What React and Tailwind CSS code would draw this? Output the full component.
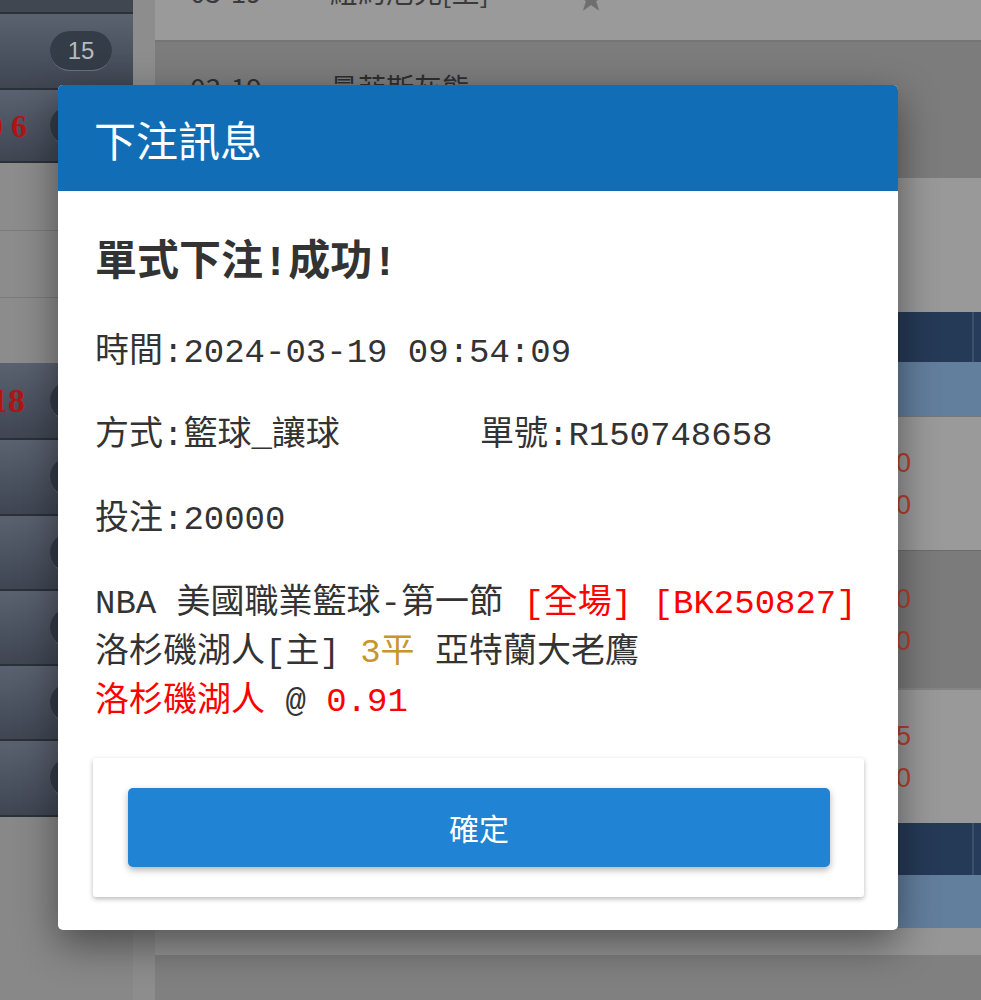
import React from 'react';

const mono = "font-['Liberation_Mono','Noto_Sans_CJK_TC',monospace]";
const cjk = "font-['Noto_Sans_CJK_TC',sans-serif]";

const DarkRow = ({ h, num, shift = '', badge }) => (
  <div className={`flex items-center border-b-2 border-[#2b3139] bg-gradient-to-b from-[#5a6270] to-[#3f4652] ${h}`}>
    <div className="w-[50px] shrink-0 overflow-hidden">
      <span className={`block whitespace-nowrap font-bold text-[#b01515] font-['Liberation_Serif',serif] leading-none ${shift}`}>
        {num}
      </span>
    </div>
    <span className="flex h-[40px] w-[62px] items-center justify-center rounded-full border-b border-[#6a717b] bg-[#343c47] text-[24px] text-[#b7bbc0] font-['Liberation_Sans',sans-serif]">
      {badge}
    </span>
  </div>
);

const OddsRow = ({ h, bg, a, b }) => (
  <div className={`flex flex-col items-end justify-center gap-[14px] pr-[70px] text-[27px] leading-[28px] text-[#b3402c] font-['Liberation_Sans',sans-serif] ${h} ${bg}`}>
    <span>{a}</span>
    <span>{b}</span>
  </div>
);

const Background = () => (
  <div className="flex h-[1000px] w-[981px]">
    {/* side list */}
    <div className="flex w-[133px] shrink-0 flex-col bg-[#888]">
      <div className="h-[14px] border-b-2 border-[#2b3139] bg-[#404751]" />
      <DarkRow h="h-[76px]" badge="15" />
      <DarkRow h="h-[73px]" num="06" shift="-ml-[13px] tracking-[8px] text-[32px]" badge="" />
      <div className="h-[68px] border-b border-[#7b7b7b] bg-[#8c8c8c]" />
      <div className="h-[67px] border-b border-[#7b7b7b] bg-[#8c8c8c]" />
      <div className="h-[65px] bg-[#8c8c8c]" />
      <DarkRow h="h-[77px]" num="18" shift="-ml-[9px] text-[34px]" badge="" />
      <DarkRow h="h-[76px]" badge="" />
      <DarkRow h="h-[75px]" badge="" />
      <DarkRow h="h-[75px]" badge="" />
      <DarkRow h="h-[75px]" badge="" />
      <DarkRow h="h-[76px]" badge="" />
    </div>
    <div className="w-[22px] shrink-0 bg-[#8d8d8d]" />
    {/* main table */}
    <div className={`flex flex-1 flex-col bg-[#808080] ${cjk}`}>
      <div className="flex h-[42px] items-start overflow-hidden border-b-2 border-[#757575] bg-[#9a9a9a] text-[28px] text-[#3a3a3a]">
        <span className="-mt-[30px] ml-[35px] w-[140px]">03-19</span>
        <span className="-mt-[30px]">紐約尼克[主]</span>
        <span className="-mt-[24px] ml-[88px] text-[28px] text-[#6e6e6e]">★</span>
      </div>
      <div className="flex h-[136px] items-start bg-[#7c7c7c] pt-[24px] text-[28px] text-[#2e2e2e]">
        <span className="ml-[35px] w-[140px]">03-19</span>
        <span>曼菲斯灰熊</span>
      </div>
      <div className="h-[134px] bg-[#999]" />
      <div className="flex h-[50px] justify-end bg-[#253a57]">
        <div className="w-[9px] border-l-2 border-[#3b506d] bg-[#263c5a]" />
      </div>
      <div className="h-[55px] border-b border-[#777] bg-gradient-to-r from-[#5b7695] to-[#637f9e]" />
      <OddsRow h="h-[133px]" bg="bg-[#9a9a9a]" a="1.90" b="2.00" />
      <OddsRow h="h-[138px]" bg="bg-[#7b7b7b] border-t border-[#6c6c6c]" a="1.90" b="1.80" />
      <OddsRow h="h-[135px]" bg="bg-[#999] border-t-2 border-[#858585]" a="1.85" b="1.90" />
      <div className="flex h-[52px] justify-end bg-[#253a57]">
        <div className="w-[9px] border-l-2 border-[#3b506d] bg-[#263c5a]" />
      </div>
      <div className="h-[53px] bg-gradient-to-r from-[#5b7695] to-[#637f9e]" />
      <div className="h-[27px] bg-[#969696]" />
    </div>
  </div>
);

export default function App() {
  return (
    <div className="relative h-[1000px] w-[981px] overflow-hidden bg-[#808080]">
      <Background />

      {/* dialog */}
      <div className="absolute left-[58px] top-[85px] w-[840px] overflow-hidden rounded-[5px] bg-white shadow-[0_14px_40px_rgba(0,0,0,0.45)]">
        <div className={`flex h-[106px] items-center bg-[#106db6] px-[36px] text-[42px] font-normal text-white ${cjk}`}>
          下注訊息
        </div>
        <div className={`px-[37px] pt-[48px] pb-[33px] text-[#333] ${mono}`}>
          <div className="text-[42px] font-bold leading-[50px] whitespace-nowrap">單式下注!成功!</div>
          <div className="mt-[40px] text-[34px] leading-[49px] whitespace-nowrap">時間:2024-03-19 09:54:09</div>
          <div className="mt-[34px] flex text-[34px] leading-[49px] whitespace-nowrap">
            <span className="w-[385px] shrink-0">方式:籃球_讓球</span>
            <span>單號:R150748658</span>
          </div>
          <div className="mt-[35px] text-[34px] leading-[49px] whitespace-nowrap">投注:20000</div>
          <div className="mt-[35px] text-[34px] leading-[49px]">
            <div className="whitespace-pre">
              NBA 美國職業籃球-第一節 <span className="text-[#ff0000]">[全場]</span> <span className="text-[#ff0000]">[BK250827]</span>
            </div>
            <div className="whitespace-pre">
              洛杉磯湖人[主] <span className="text-[#c8952a]">3平</span> 亞特蘭大老鷹
            </div>
            <div className="whitespace-pre">
              <span className="text-[#ff0000]">洛杉磯湖人</span> @ <span className="text-[#ff0000]">0.91</span>
            </div>
          </div>
          <div className="mt-[31px] -ml-[2px] -mr-[3px] rounded-[3px] bg-white py-[30px] pl-[35px] pr-[34px] shadow-[0_2px_5px_rgba(0,0,0,0.28)]">
            <button className={`flex h-[79px] w-full items-center justify-center rounded-[5px] bg-[#2083d4] text-[30px] font-normal text-white shadow-[0_3px_7px_rgba(0,0,0,0.3)] ${cjk}`}>
              確定
            </button>
          </div>
        </div>
      </div>
    </div>
  );
}
